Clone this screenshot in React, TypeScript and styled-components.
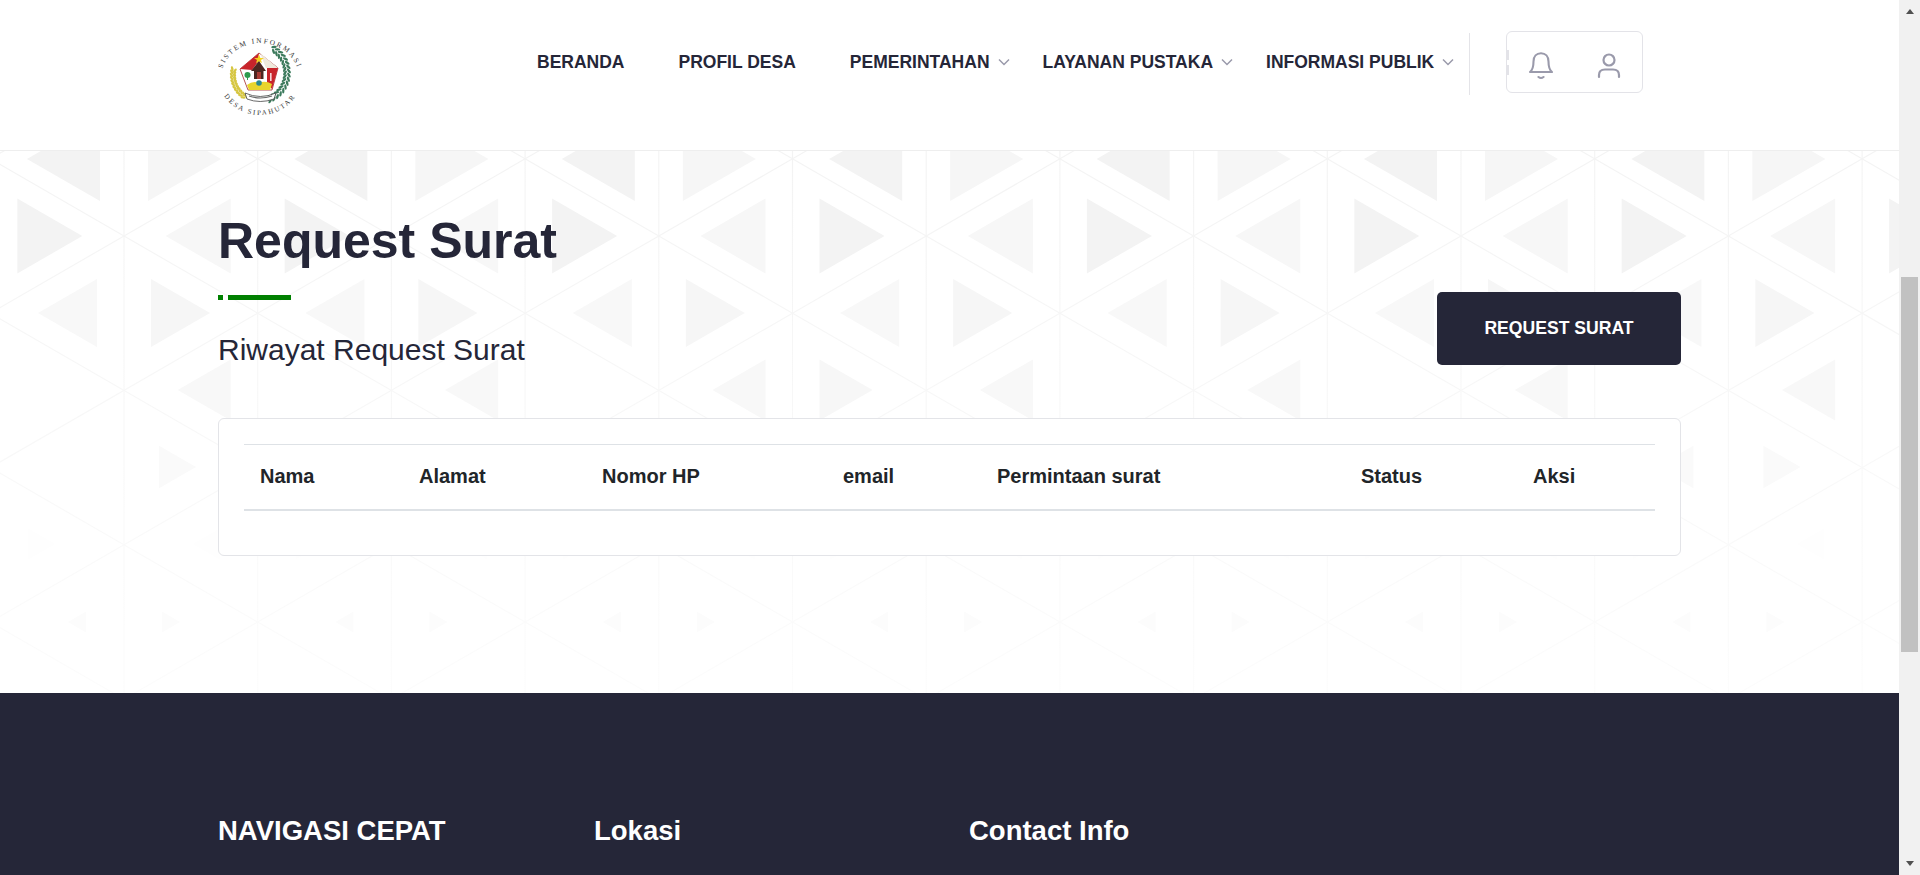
import React from "react";
import styled, { createGlobalStyle } from "styled-components";

const Global = createGlobalStyle`
  html, body { margin: 0; padding: 0; height: 875px; overflow: hidden; background: #fff; }
  body { font-family: "Liberation Sans", Arial, sans-serif; color: #252638; }
  #root { height: 875px; }
  * { box-sizing: border-box; }
`;

const Shell = styled.div`
  display: flex;
  width: 1920px;
  height: 875px;
  overflow: hidden;
`;
const Page = styled.div`
  flex: 0 0 1899px;
  width: 1899px;
  height: 875px;
  overflow: hidden;
  display: flex;
  flex-direction: column;
`;
const Bar = styled.aside`
  flex: 0 0 21px;
  background: #f1f1f1;
  display: flex;
  flex-direction: column;
  align-items: center;
`;
const ArrowUp = styled.span`
  width: 0;
  height: 0;
  margin-top: 9px;
  border-left: 4.5px solid transparent;
  border-right: 4.5px solid transparent;
  border-bottom: 5px solid #505050;
`;
const ArrowDown = styled.span`
  width: 0;
  height: 0;
  margin-top: auto;
  margin-bottom: 9px;
  border-left: 4.5px solid transparent;
  border-right: 4.5px solid transparent;
  border-top: 5px solid #505050;
`;
const Thumb = styled.span`
  width: 17px;
  height: 375px;
  margin-top: 263px;
  background: #c1c1c1;
`;

const Header = styled.header`
  flex: 0 0 151px;
  height: 151px;
  background: #fff;
  border-bottom: 1px solid #eeeeee;
  padding: 31px 0 0 218px;
  display: flex;
  align-items: flex-start;
  position: relative;
  z-index: 1;
`;
const LogoBox = styled.a`
  display: block;
  width: 86px;
  height: 86px;
  margin-top: 1px;
`;
const Nav = styled.nav`
  display: flex;
  align-items: center;
  height: 62px;
  margin-left: 233px;
`;
const NavLink = styled.a<{ $chevron?: boolean }>`
  display: flex;
  align-items: center;
  font-size: 17.5px;
  font-weight: 700;
  color: #252638;
  white-space: nowrap;
  margin-right: ${(p) => (p.$chevron ? "33px" : "54px")};
  &:last-child { margin-right: 0; }
`;
const Chevron = styled.svg`
  width: 12px;
  height: 8px;
  margin-left: 8px;
  fill: none;
  stroke: #9a9aab;
  stroke-width: 1.5;
`;
const Divider = styled.div`
  width: 1px;
  height: 62px;
  margin: 2px 0 0 15px;
  background: #e4e4e8;
`;
const IconBox = styled.div`
  display: flex;
  align-items: center;
  width: 137px;
  height: 62px;
  margin-left: 36px;
  padding-top: 7px;
  border: 1px solid #e3e3e8;
  border-radius: 6px;
  background: #fff;
`;
const Marks = styled.div`
  display: flex;
  flex-direction: column;
  gap: 5px;
  width: 2px;
  margin-top: -7px;
`;
const Mark = styled.span`
  display: block;
  width: 2px;
  height: 10px;
  background: #e3e3e8;
`;
const BellIcon = styled.svg`
  width: 26px;
  height: 28px;
  margin-left: 19px;
  fill: none;
  stroke: #9a9aab;
  stroke-width: 2.1;
  stroke-linecap: round;
  stroke-linejoin: round;
`;
const UserIcon = styled.svg`
  width: 24px;
  height: 26px;
  margin-left: 43px;
  fill: none;
  stroke: #9a9aab;
  stroke-width: 2.2;
  stroke-linecap: round;
  stroke-linejoin: round;
`;

const Main = styled.main`
  flex: 0 0 542px;
  height: 542px;
  position: relative;
  background: #fff;
  overflow: hidden;
`;
const Pattern = styled.svg`
  position: absolute;
  top: 0;
  left: 0;
  width: 1899px;
  height: 542px;
`;
const Container = styled.div`
  position: relative;
  width: 1463px;
  margin: 0 auto;
  padding-top: 61px;
`;
const HeadRow = styled.div`
  display: flex;
  justify-content: space-between;
  align-items: flex-end;
`;
const Title = styled.h1`
  margin: 0;
  font-size: 50px;
  line-height: 58px;
  font-weight: 700;
  color: #252638;
`;
const Accent = styled.div`
  display: flex;
  gap: 5px;
  height: 5px;
  margin-top: 25px;
`;
const AccentPiece = styled.span<{ $w: number }>`
  display: block;
  width: ${(p) => p.$w}px;
  height: 5px;
  background: #008000;
`;
const Subtitle = styled.h2`
  margin: 32px 0 0;
  font-size: 30px;
  line-height: 36px;
  font-weight: 400;
  color: #252638;
`;
const PrimaryButton = styled.a`
  display: flex;
  align-items: center;
  justify-content: center;
  width: 244px;
  height: 73px;
  margin-bottom: 3px;
  border-radius: 5px;
  background: #252638;
  color: #fff;
  font-size: 17.6px;
  font-weight: 700;
  white-space: nowrap;
`;
const Card = styled.section`
  margin-top: 50px;
  padding: 25px;
  height: 138px;
  background: #fff;
  border: 1px solid #e3e4e8;
  border-radius: 6px;
`;
const Table = styled.table`
  width: 100%;
  table-layout: fixed;
  border-collapse: collapse;
`;
const Th = styled.th<{ $w: number }>`
  width: ${(p) => p.$w}px;
  height: 65px;
  padding: 0 0 0 16px;
  text-align: left;
  font-size: 20px;
  font-weight: 700;
  color: #212529;
  border-top: 1px solid #dee2e6;
  border-bottom: 2px solid #dee2e6;
`;

const Footer = styled.footer`
  flex: 1 1 auto;
  background: #252638;
  padding: 121px 0 0 218px;
`;
const FooterGrid = styled.div`
  display: grid;
  grid-template-columns: 376px 375px 375px;
`;
const FooterHeading = styled.h3`
  margin: 0;
  font-size: 27.5px;
  line-height: 34px;
  font-weight: 700;
  color: #fff;
`;

const DX = 133.7;
const DY = 77.2;

type RowSpec = { y: number; off: number; len: number; r: string; l: string };
const rows: RowSpec[] = [
  { y: 159, off: 24, len: 73, r: "#f6f6f6", l: "#f3f3f3" },
  { y: 236, off: 27, len: 65, r: "#f3f3f3", l: "#f7f7f7" },
  { y: 313, off: 27, len: 59, r: "#f6f6f6", l: "#f8f8f8" },
  { y: 390, off: 27, len: 53, r: "#f7f7f7", l: "#f8f8f8" },
  { y: 467, off: 35, len: 37, r: "#fafafa", l: "#fafafa" },
  { y: 544, off: 38, len: 27, r: "#fefefe", l: "#fefefe" },
  { y: 622, off: 38, len: 18, r: "#fcfcfc", l: "#fcfcfc" },
];

function triangles() {
  const out: { points: string; fill: string }[] = [];
  rows.forEach((row, idx) => {
    const first = idx % 2 === 0 ? 124 + DX : 124;
    const h = row.len * 0.577;
    for (let m = -1; m < 9; m++) {
      const c = first + 2 * DX * m;
      const rBase = c - DX + row.off;
      const lBase = c + DX - row.off;
      const showR = row.y !== 390 || m === 3;
      const showL = !(row.y === 467 && m === -1);
      if (showR) {
        out.push({
          points: `${rBase},${row.y - h} ${rBase},${row.y + h} ${rBase + row.len},${row.y}`,
          fill: row.r,
        });
      }
      if (showL) {
        out.push({
          points: `${lBase},${row.y - h} ${lBase},${row.y + h} ${lBase - row.len},${row.y}`,
          fill: row.l,
        });
      }
    }
  });
  return out;
}

function lattice() {
  const lines: { x1: number; y1: number; x2: number; y2: number }[] = [];
  for (let k = 0; k < 15; k++) {
    const x = 124 + DX * k;
    lines.push({ x1: x, y1: 151, x2: x, y2: 693 });
  }
  const slope = DY / DX;
  for (let n = -14; n < 14; n++) {
    const y0 = 236 + 2 * DY * n;
    lines.push({ x1: -10, y1: y0 + slope * (-10 - 124), x2: 1910, y2: y0 + slope * (1910 - 124) });
    lines.push({ x1: -10, y1: y0 - slope * (-10 - 124), x2: 1910, y2: y0 - slope * (1910 - 124) });
  }
  return lines;
}

const PagePattern = () => (
  <Pattern viewBox="0 151 1899 542" aria-hidden="true">
    <defs>
      <linearGradient id="fade" gradientUnits="userSpaceOnUse" x1="0" y1="151" x2="0" y2="693">
        <stop offset="0" stopColor="#f3f3f3" />
        <stop offset="1" stopColor="#fcfcfc" />
      </linearGradient>
    </defs>
    {lattice().map((l, i) => (
      <line key={i} {...l} stroke="url(#fade)" strokeWidth="1.1" />
    ))}
    {triangles().map((t, i) => (
      <polygon key={i} points={t.points} fill={t.fill} />
    ))}
  </Pattern>
);

const arcPoint = (cx: number, cy: number, r: number, deg: number) => {
  const a = (deg * Math.PI) / 180;
  return { x: cx + r * Math.cos(a), y: cy + r * Math.sin(a) };
};

const Logo = () => {
  const wheat = Array.from({ length: 22 }, (_, i) => {
    const deg = 122 + i * 3.4;
    const r = i % 2 === 0 ? 24.5 : 27.5;
    return { ...arcPoint(59, 55, r, deg), rot: deg + 90 + (i % 2 === 0 ? 30 : -30) };
  });
  const leaves = Array.from({ length: 34 }, (_, i) => {
    const deg = 72 - i * 4;
    const r = i % 2 === 0 ? 26 : 30;
    return { ...arcPoint(59, 53, r, deg), rot: deg + 90 + (i % 2 === 0 ? 35 : -35) };
  });
  return (
    <svg width="86" height="86" viewBox="18 12 86 86" role="img" aria-label="Sistem Informasi Desa Sipahutar">
      <defs>
        <path id="logoTop" d="M21 58 A38 34 0 0 1 99 58" />
        <path id="logoBottom" d="M18 55 A42 40 0 0 0 102 55" />
      </defs>
      <text fontFamily="Liberation Serif, serif" fontSize="7.2" letterSpacing="1.9" fill="#333" textAnchor="middle">
        <textPath href="#logoTop" startOffset="50%">SISTEM INFORMASI</textPath>
      </text>
      <text fontFamily="Liberation Serif, serif" fontSize="7" letterSpacing="1.9" fill="#333" textAnchor="middle">
        <textPath href="#logoBottom" startOffset="50%">DESA SIPAHUTAR</textPath>
      </text>
      {wheat.map((w, i) => (
        <ellipse key={i} cx={w.x} cy={w.y} rx="2.6" ry="1.2" fill="#d6c642" transform={`rotate(${w.rot} ${w.x} ${w.y})`} />
      ))}
      {leaves.map((w, i) => (
        <ellipse key={i} cx={w.x} cy={w.y} rx="2.8" ry="1.2" fill="#3c7a5c" transform={`rotate(${w.rot} ${w.x} ${w.y})`} />
      ))}
      <polygon points="59,33 40,49 48,70 72,70 78,48" fill="#fff" stroke="#a3262a" strokeWidth="0.8" />
      <polygon points="59,33 40,49 52,50 58,42" fill="#c8242b" />
      <polygon points="60,33 78,48 66,48" fill="#efe9dc" />
      <polygon points="67,48 78,48 72,69 67,63" fill="#c8242b" />
      <rect x="70.2" y="53" width="1.3" height="8" fill="#fff" />
      <polygon points="59,34.5 60.4,38 64,38 61,40 62,43 59,41.4 56,43 57,40 54,38 57.6,38" fill="#f4d21f" />
      <polygon points="51,51 59,41 66,51 63.5,51 63.5,59 54,59 54,51" fill="#4c2620" />
      <rect x="57" y="52" width="4" height="7" fill="#a83a32" />
      <circle cx="47.5" cy="55" r="3" fill="#2f9a4d" />
      <rect x="47" y="56" width="1" height="4" fill="#2f9a4d" />
      <path d="M47 65 Q53 60 59 63 Q65 60 72 64 L70 70 L49 70 Z" fill="#e8d52c" />
      <circle cx="59" cy="63" r="2.8" fill="#2c8a8f" />
      <path d="M45 73 Q60 80 76 73 L74 79 Q60 84 47 79 Z" fill="#fff" stroke="#444" strokeWidth="0.8" />
      <path d="M49 76 Q60 80 72 76" fill="none" stroke="#666" strokeWidth="1.2" />
    </svg>
  );
};

const Chev = () => (
  <Chevron viewBox="0 0 12 8">
    <path d="M1 1.5 L6 6.5 L11 1.5" />
  </Chevron>
);

const columns: [string, number][] = [
  ["Nama", 159],
  ["Alamat", 183],
  ["Nomor HP", 241],
  ["email", 154],
  ["Permintaan surat", 364],
  ["Status", 172],
  ["Aksi", 138],
];

export default function App() {
  return (
    <>
      <Global />
      <Shell>
        <Page>
          <Header>
            <LogoBox>
              <Logo />
            </LogoBox>
            <Nav>
              <NavLink>BERANDA</NavLink>
              <NavLink>PROFIL DESA</NavLink>
              <NavLink $chevron>PEMERINTAHAN<Chev /></NavLink>
              <NavLink $chevron>LAYANAN PUSTAKA<Chev /></NavLink>
              <NavLink $chevron>INFORMASI PUBLIK<Chev /></NavLink>
            </Nav>
            <Divider />
            <IconBox>
              <Marks>
                <Mark />
                <Mark />
              </Marks>
              <BellIcon viewBox="0 0 26 28">
                <path d="M2 20 C4.5 18 5.5 15 5.5 9.5 C5.5 4.5 8.5 1.2 13 1.2 C17.5 1.2 20.5 4.5 20.5 9.5 C20.5 15 21.5 18 24 20 Z" />
                <path d="M10.5 25 Q13 27 15.5 25" />
              </BellIcon>
              <UserIcon viewBox="0 0 24 26">
                <circle cx="12" cy="7" r="5.5" />
                <path d="M2 24 V22 C2 18.5 4.5 16.5 8 16.5 H16 C19.5 16.5 22 18.5 22 22 V24" />
              </UserIcon>
            </IconBox>
          </Header>
          <Main>
            <PagePattern />
            <Container>
              <HeadRow>
                <div>
                  <Title>Request Surat</Title>
                  <Accent>
                    <AccentPiece $w={5} />
                    <AccentPiece $w={63} />
                  </Accent>
                  <Subtitle>Riwayat Request Surat</Subtitle>
                </div>
                <PrimaryButton>REQUEST SURAT</PrimaryButton>
              </HeadRow>
              <Card>
                <Table>
                  <thead>
                    <tr>
                      {columns.map(([label, w]) => (
                        <Th key={label} $w={w}>{label}</Th>
                      ))}
                    </tr>
                  </thead>
                </Table>
              </Card>
            </Container>
          </Main>
          <Footer>
            <FooterGrid>
              <FooterHeading>NAVIGASI CEPAT</FooterHeading>
              <FooterHeading>Lokasi</FooterHeading>
              <FooterHeading>Contact Info</FooterHeading>
            </FooterGrid>
          </Footer>
        </Page>
        <Bar>
          <ArrowUp />
          <Thumb />
          <ArrowDown />
        </Bar>
      </Shell>
    </>
  );
}
